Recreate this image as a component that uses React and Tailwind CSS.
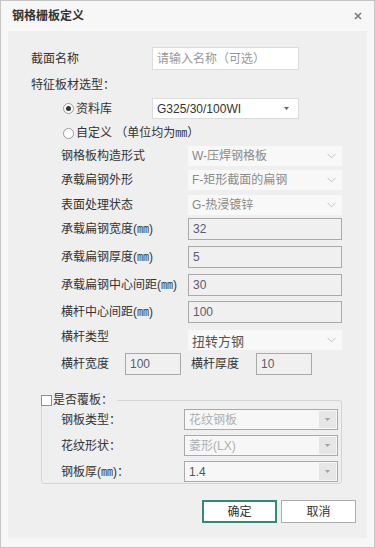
import React from 'react';

const FONT = "font-['Liberation_Sans','Noto_Sans_CJK_SC',sans-serif]";

function Chevron() {
  return (
    <svg width="9" height="6" viewBox="0 0 9 6" className="shrink-0">
      <path d="M0.5 0.8 L4.5 4.8 L8.5 0.8" fill="none" stroke="#c4c4c4" strokeWidth="1" />
    </svg>
  );
}

function Tri({ color = '#555' }) {
  return (
    <svg width="5" height="3" viewBox="0 0 5 3" className="shrink-0">
      <path d="M0 0 H5 L2.5 3 Z" fill={color} />
    </svg>
  );
}

function FlatSelect({ value, dark }) {
  return (
    <div className="w-[154px] h-[20px] bg-[#f8f8f8] flex items-center justify-between pl-[4px] pr-[6px]">
      <span className={dark ? 'text-[13px] text-[#555] leading-none mt-[3px]' : 'text-[12px] text-[#8a8a8a] leading-none'}>{value}</span>
      <Chevron />
    </div>
  );
}

function Box({ value, w = 'w-[154px]' }) {
  return (
    <div className={`${w} h-[22px] border border-[#a9a9a9] bg-[#f0f0f0] pl-[4px] pt-[4px] text-[12px] leading-none text-[#5b5b70]`}>
      {value}
    </div>
  );
}

function Combo({ value, dark }) {
  return (
    <div className="w-[154px] h-[21px] border border-[#aaaaaa] bg-[#f7f7f7] p-[1px] flex">
      <div className={`flex-1 flex items-center pl-[3px] text-[12px] leading-none ${dark ? 'text-[#555]' : 'text-[#b0b0b0]'}`}>{value}</div>
      <div className="w-[17px] bg-[#e6e6e6] flex items-center justify-center">
        <Tri color="#a0a0a0" />
      </div>
    </div>
  );
}

function Row({ label, mt, children }) {
  return (
    <div className={`flex items-center ${mt} pl-[53px]`}>
      <span className="w-[127px] text-[12px] text-[#333] leading-none">{label}</span>
      {children}
    </div>
  );
}

function Radio({ checked }) {
  return (
    <span className="w-[11px] h-[11px] rounded-full border border-[#9a9a9a] bg-white flex items-center justify-center shrink-0">
      {checked && <span className="w-[5px] h-[5px] rounded-full bg-[#333]" />}
    </span>
  );
}

export default function App() {
  return (
    <div className={`w-[375px] h-[548px] bg-[#f7f7f7] border border-[#c6c6c6] flex flex-col ${FONT}`}>
      {/* Title bar */}
      <div className="h-[30px] flex items-center justify-between pl-[11px] pr-[12px] shrink-0">
        <span className="text-[12px] font-bold text-[#333] leading-none">钢格栅板定义</span>
        <svg width="8" height="8" viewBox="0 0 8 8">
          <path d="M1 1 L7 7 M7 1 L1 7" stroke="#7a7a7a" strokeWidth="1.6" />
        </svg>
      </div>

      {/* Body */}
      <div className="mx-[7px] mb-[9px] flex-1 bg-[#efefef] flex flex-col">
        <div className="flex items-center mt-[16px] pl-[23px]">
          <span className="w-[121px] text-[12px] text-[#333] leading-none">截面名称</span>
          <div className="w-[147px] h-[23px] border border-[#dcdcdc] bg-white flex items-center pl-[4px] text-[12px] text-[#999] leading-none">
            请输入名称（可选）
          </div>
        </div>

        <div className="mt-[6px] h-[18px] flex items-center pl-[23px] text-[12px] text-[#333] leading-none">特征板材选型：</div>

        <div className="mt-[4px] flex items-center pl-[55px]">
          <div className="w-[89px] flex items-center gap-[2px]">
            <Radio checked />
            <span className="text-[12px] text-[#333] leading-none">资料库</span>
          </div>
          <div className="w-[147px] h-[21px] border border-[#dcdcdc] bg-white flex items-center justify-between pl-[4px] pr-[9px]">
            <span className="text-[12px] text-[#333] leading-none">G325/30/100WI</span>
            <Tri color="#666" />
          </div>
        </div>

        <div className="mt-[5px] h-[18px] flex items-center gap-[2px] pl-[55px]">
          <Radio />
          <span className="text-[12px] text-[#333] leading-none">自定义 （单位均为㎜）</span>
        </div>

        <Row label="钢格板构造形式" mt="mt-[4px]"><FlatSelect value="W-压焊钢格板" /></Row>
        <Row label="承载扁钢外形" mt="mt-[4px]"><FlatSelect value="F-矩形截面的扁钢" /></Row>
        <Row label="表面处理状态" mt="mt-[5px]"><FlatSelect value="G-热浸镀锌" /></Row>
        <Row label="承载扁钢宽度(㎜)" mt="mt-[3px]"><Box value="32" /></Row>
        <Row label="承载扁钢厚度(㎜)" mt="mt-[6px]"><Box value="5" /></Row>
        <Row label="承载扁钢中心间距(㎜)" mt="mt-[6px]"><Box value="30" /></Row>
        <Row label="横杆中心间距(㎜)" mt="mt-[5px]"><Box value="100" /></Row>

        <div className="flex items-start mt-[7px] pl-[53px]">
          <span className="w-[127px] text-[12px] text-[#333] leading-none pt-[1px]">横杆类型</span>
          <FlatSelect value="扭转方钢" dark />
        </div>

        <div className="flex items-center mt-[3px] pl-[53px]">
          <span className="w-[64px] text-[12px] text-[#333] leading-none">横杆宽度</span>
          <Box value="100" w="w-[56px]" />
          <span className="ml-[10px] w-[65px] text-[12px] text-[#333] leading-none">横杆厚度</span>
          <Box value="10" w="w-[56px]" />
        </div>

        {/* Group box */}
        <fieldset className="ml-[33px] mt-[19px] w-[301px] h-[90px] border border-[#d4d4d4] rounded-[3px] pl-[19px]">
          <legend className="-ml-[20px] pr-[4px] flex items-center gap-[1px]">
            <span className="w-[11px] h-[11px] border border-[#8f8f8f] bg-white" />
            <span className="text-[12px] text-[#333] leading-none">是否覆板：</span>
          </legend>
          <div className="flex items-center mt-[3px]">
            <span className="w-[123px] text-[12px] text-[#333] leading-none">钢板类型：</span>
            <Combo value="花纹钢板" />
          </div>
          <div className="flex items-center mt-[5px]">
            <span className="w-[123px] text-[12px] text-[#333] leading-none">花纹形状：</span>
            <Combo value="菱形(LX)" />
          </div>
          <div className="flex items-center mt-[5px]">
            <span className="w-[123px] text-[12px] text-[#333] leading-none">钢板厚(㎜)：</span>
            <Combo value="1.4" dark />
          </div>
        </fieldset>

        <div className="mt-[16px] flex justify-end gap-[4px] pr-[11px]">
          <button className="w-[75px] h-[23px] border-2 border-[#2f8b78] bg-white text-[12px] text-[#333] leading-none">确定</button>
          <button className="w-[75px] h-[23px] border border-[#adadad] bg-white text-[12px] text-[#333] leading-none">取消</button>
        </div>
      </div>
    </div>
  );
}
